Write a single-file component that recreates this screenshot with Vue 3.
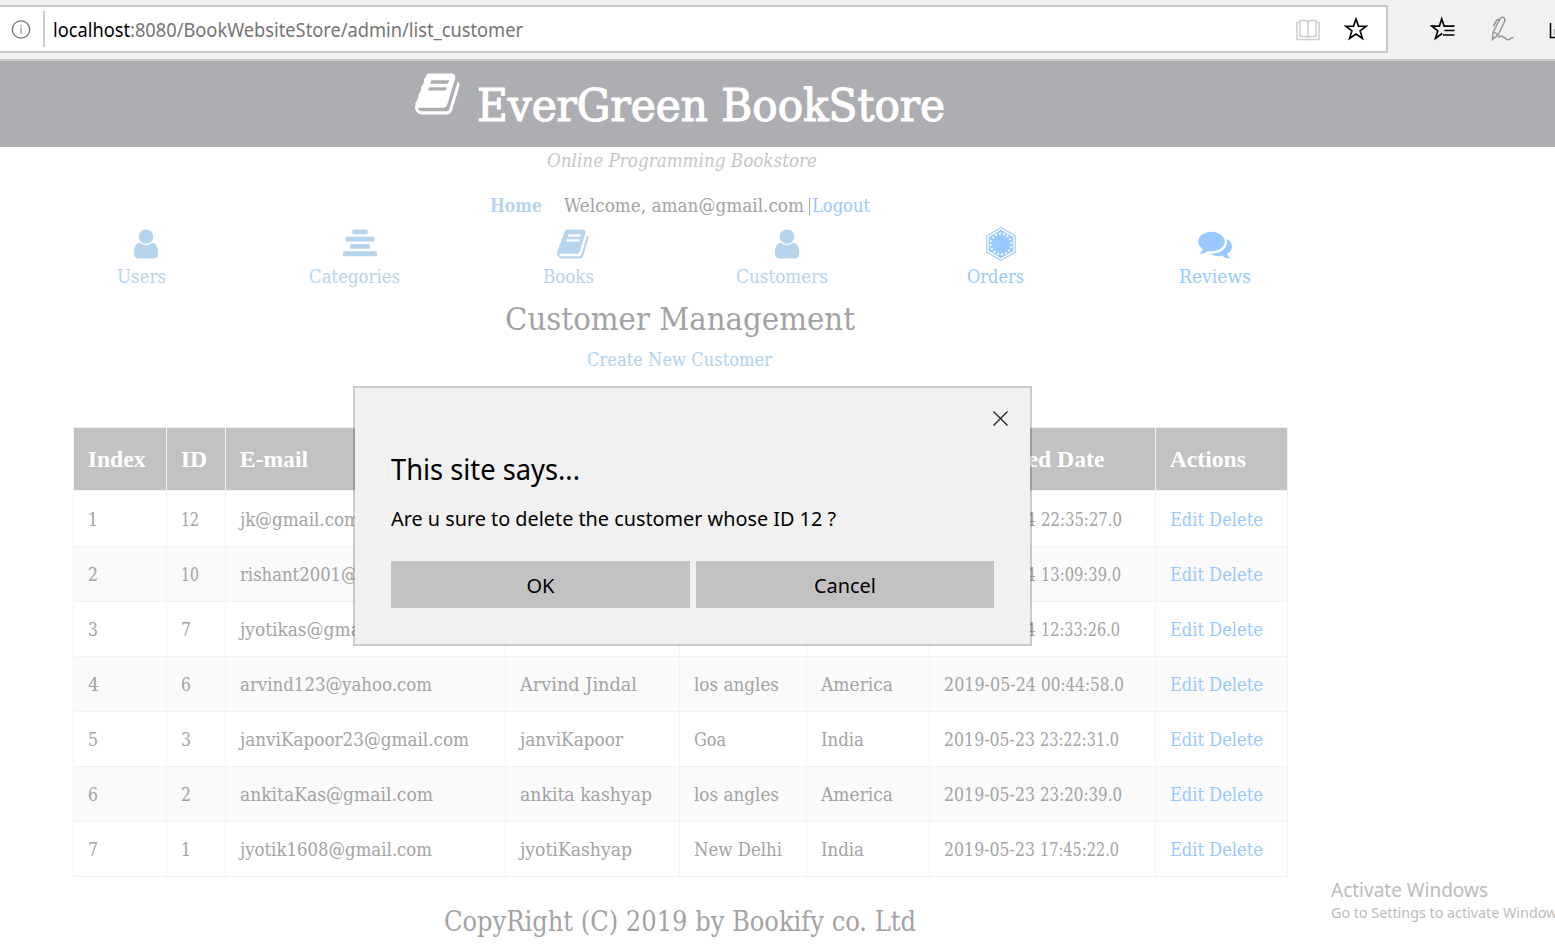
<script setup>
const icons = {
  book: 'M1639 478q40 57 18 129l-275 906q-19 64-76.5 107.5t-122.5 43.5h-923q-77 0-148.5-53.5t-99.5-131.5q-24-67-2-127 0-4 3-27t4-37q1-8-3-21.5t-3-19.5q2-11 8-21t16.5-23.5 16.5-23.5q23-38 45-91.5t30-91.5q3-10 .5-30t-.5-28q3-11 17-28t17-23q21-36 42-92t25-90q1-9-2.5-32t.5-28q4-13 22-30.5t22-22.5q19-26 42.5-84.5t27.5-96.5q1-8-3-25.5t-2-26.5q2-8 9-18t18-23 17-21q8-12 16.5-30.5t15-35 16-36 19.5-32 26.5-23.5 36-11.5 47.5 5.5l-1 3q38-9 51-9h761q74 0 114 56t18 130l-274 906q-36 119-71.5 153.5t-128.5 34.5h-869q-27 0-38 15-11 16-1 43 24 70 144 70h923q29 0 56-15.5t35-41.5l300-987q7-22 5-57 38 15 59 43zm-1064 2q-4 13 2 22.5t20 9.5h608q13 0 25.5-9.5t16.5-22.5l21-64q4-13-2-22.5t-20-9.5h-608q-13 0-25.5 9.5t-16.5 22.5zm-83 256q-4 13 2 22.5t20 9.5h608q13 0 25.5-9.5t16.5-22.5l21-64q4-13-2-22.5t-20-9.5h-608q-13 0-25.5 9.5t-16.5 22.5z',
  user: 'M1536 1399q0 109-62.5 187t-150.5 78h-854q-88 0-150.5-78t-62.5-187q0-85 8.5-160.5t31.5-152 58.5-131 94-89 134.5-34.5q131 128 313 128t313-128q76 0 134.5 34.5t94 89 58.5 131 31.5 152 8.5 160.5zm-256-887q0 159-112.5 271.5t-271.5 112.5-271.5-112.5-112.5-271.5 112.5-271.5 271.5-112.5 271.5 112.5 112.5 271.5z',
  bars: 'M560 128h672q64 0 64 64v128q0 64-64 64h-672q-64 0-64-64v-128q0-64 64-64zM192 512h1408q64 0 64 64v128q0 64-64 64h-1408q-64 0-64-64v-128q0-64 64-64zM448 896h896q64 0 64 64v128q0 64-64 64h-896q-64 0-64-64v-128q0-64 64-64zM64 1280h1664q64 0 64 64v128q0 64-64 64h-1664q-64 0-64-64v-128q0-64 64-64z',
  comments: 'M1408 768q0 139-94 257t-256.5 186.5-353.5 68.5q-86 0-176-16-124 88-278 128-36 9-86 16h-3q-11 0-20.5-8t-11.5-21q-1-3-1-6.5t.5-6.5 2-6l2.5-5 3.5-5.5 4-5 4.5-5 4-4.5q5-6 23-25t26-29.5 22.5-29 25-38.5 20.5-44q-124-72-195-177t-71-224q0-139 94-257t256.5-186.5 353.5-68.5 353.5 68.5 256.5 186.5 94 257zm384 256q0 120-71 224.5t-195 176.5q10 24 20.5 44t25 38.5 22.5 29 26 29.5 23 25q1 1 4 4.5t4.5 5 4 5 3.500 5.500l2.500 5 2 6 .5 6.500-1 6.500q-3 14-13 22t-22 7q-50-7-86-16-154-40-278-128-90 16-176 16-271 0-472-132 58 4 88 4 161 0 309-45t264-129q125-92 192-212t67-254q0-77-23-152 129 71 204 178t75 230z'
}

// Sunburst: 16 narrow spokes around a filled core
const burst = Array.from({ length: 32 }, (_, i) => {
  const a = ((i + 0.5) * Math.PI) / 16
  const at = (rad, ang) => `${(17 + rad * Math.cos(ang)).toFixed(2)},${(17 + rad * Math.sin(ang)).toFixed(2)}`
  return i % 2 ? at(8.4, a) : `${at(11.8, a - 0.07)} ${at(11.8, a + 0.07)}`
}).join(' ')

const nav = [
  { label: 'Users', icon: 'user', w: 49 },
  { label: 'Categories', icon: 'bars', w: 91 },
  { label: 'Books', icon: 'book', w: 51 },
  { label: 'Customers', icon: 'user', w: 92 },
  { label: 'Orders', icon: 'order', w: 57, bright: true },
  { label: 'Reviews', icon: 'comments', w: 72, bright: true }
]

const heads = ['Index', 'ID', 'E-mail', '', '', '', 'Registered Date', 'Actions']

// Every cell is [text, width in px]; a width of 0 keeps the natural width
const rows = [
  { cells: [['1', 0], ['12', 18], ['jk@gmail.com', 120], ['', 0], ['', 0], ['', 0]], date: ['2019-05-24', 92], time: ['22:35:27.0', 81] },
  { cells: [['2', 10], ['10', 18], ['rishant2001@gmail.com', 204], ['', 0], ['', 0], ['', 0]], date: ['2019-05-24', 92], time: ['13:09:39.0', 80] },
  { cells: [['3', 10], ['7', 10], ['jyotikas@gmail.com', 173], ['', 0], ['', 0], ['', 0]], date: ['2019-05-24', 92], time: ['12:33:26.0', 79] },
  { cells: [['4', 11], ['6', 10], ['arvind123@yahoo.com', 192], ['Arvind Jindal', 117], ['los angles', 85], ['America', 72]], date: ['2019-05-24', 92], time: ['00:44:58.0', 83] },
  { cells: [['5', 10], ['3', 10], ['janviKapoor23@gmail.com', 229], ['janviKapoor', 103], ['Goa', 32], ['India', 43]], date: ['2019-05-23', 91], time: ['23:22:31.0', 79] },
  { cells: [['6', 10], ['2', 10], ['ankitaKas@gmail.com', 193], ['ankita kashyap', 132], ['los angles', 85], ['America', 72]], date: ['2019-05-23', 91], time: ['23:20:39.0', 82] },
  { cells: [['7', 10], ['1', 0], ['jyotik1608@gmail.com', 192], ['jyotiKashyap', 112], ['New Delhi', 88], ['India', 43]], date: ['2019-05-23', 91], time: ['17:45:22.0', 79] }
]

// Stretches a run of text horizontally to the given width
const vFit = {
  mounted(el, { value }) {
    const natural = el.getBoundingClientRect().width
    if (!natural || !value) return
    el.style.transform = `scaleX(${value / natural})`
    el.style.marginRight = `${value - natural}px`
  }
}
</script>

<template>
  <div class="window">
    <div class="toolbar">
      <div class="address">
        <svg class="info" viewBox="0 0 20 20" width="20" height="20" fill="none" stroke="#6f6f6f">
          <circle cx="10" cy="10.500" r="8.700" stroke-width="1.300" />
          <path d="M10 8.800v6M10 6v1.600" stroke="#8c8c8c" stroke-width="1.200" />
        </svg>
        <span class="divider"></span>
        <span class="url"><span v-fit="77" class="fit host">localhost</span><span v-fit="393" class="fit">:8080/BookWebsiteStore/admin/list_customer</span></span>
        <svg class="reader" viewBox="0 0 24 22" width="24" height="22" fill="none" stroke="#cdcdcd" stroke-width="1.500">
          <path d="M4 18V1.500h5.500q2.500 0 2.500 2.500V19q0-1.500-2.500-1.500H4M20 18V1.500h-5.500Q12 1.500 12 4M12 19q0-1.500 2.500-1.500H20" />
          <path d="M3.500 3.500H1v17h10l1 .5 1-.5h10v-17h-2.500" />
        </svg>
        <svg class="star" viewBox="0 0 24 24" width="24" height="24" fill="none" stroke="#000" stroke-width="1.600">
          <path d="M12 2l2.500 7.200h7.900l-6.300 4.700 2.400 7.600L12 17l-6.500 4.500 2.400-7.600L1.600 9.200h7.900z" />
        </svg>
      </div>
      <svg class="hub" viewBox="0 0 25 24" width="25" height="24" fill="none" stroke="#000" stroke-width="1.700">
        <path d="M24.500 9.200H14.200L11.700 2 9.400 9.200H1.800l6 4.700-2.300 7.400 6.700-4.800" />
        <path d="M14.500 13.500h10M13 18h11.500" />
      </svg>
      <svg class="pen" viewBox="0 0 26 26" width="26" height="26" fill="none" stroke="#999" stroke-width="1.600">
        <path d="M4 16.500L11 3q1.500-2.500 3.500-1.500t1 4L9 19l-5.500 4.500zM4 16.500q3 0 5 2.500M10.500 3.500Q8 3 7 5.500L4.500 10M3 24l3-3M9 21.500q2-2 4.500-1t4.500 3q1.500.8 3-.5t3.500-1.500" />
      </svg>
      <svg class="share" viewBox="0 0 7 18" width="7" height="18" fill="none" stroke="#000" stroke-width="1.500">
        <path d="M1.500 0v14.500H7" /><path d="M6 6v6" stroke="#888" />
      </svg>
    </div>

    <header class="banner">
      <svg class="logo" viewBox="0 0 1792 1792" width="48" height="48" preserveAspectRatio="none"><path :d="icons.book" fill="#fff" /></svg>
      <h1><span v-fit="468" class="fit">EverGreen BookStore</span></h1>
    </header>

    <main class="page">
      <p class="tagline"><span v-fit="270" class="fit">Online Programming Bookstore</span></p>
      <p class="session">
        <b><span v-fit="52" class="fit">Home</span></b>
        <span class="welcome"><span v-fit="240" class="fit">Welcome, aman@gmail.com</span></span>
        <span class="pipe"></span>
        <a><span v-fit="58" class="fit">Logout</span></a>
      </p>

      <nav class="menu">
        <a v-for="n in nav" :key="n.label" :class="[n.icon, { bright: n.bright }]">
          <svg v-if="n.icon === 'order'" viewBox="0 0 34 34" width="34" height="34">
            <path d="M17 .6L31.200 8.800v16.400L17 33.400 2.800 25.200V8.800z" fill="none" stroke="currentColor" stroke-width="1.100" />
            <path d="M17 2.800L29.300 9.900v14.200L17 31.200 4.700 24.100V9.900z" fill="currentColor" />
            <circle cx="17" cy="17" r="11.400" fill="#fff" />
            <polygon :points="burst" fill="currentColor" />
          </svg>
          <svg v-else viewBox="0 0 1792 1792" width="34" height="34"><path :d="icons[n.icon]" fill="currentColor" /></svg>
          <span class="label"><span v-fit="n.w" class="fit">{{ n.label }}</span></span>
        </a>
      </nav>

      <h2><span v-fit="350" class="fit">Customer Management</span></h2>
      <p class="create"><span v-fit="185" class="fit">Create New Customer</span></p>

      <table>
        <colgroup>
          <col class="c1" /><col class="c2" /><col class="c3" /><col class="c4" />
          <col class="c5" /><col class="c6" /><col class="c7" /><col class="c8" />
        </colgroup>
        <thead>
          <tr><th v-for="(t, i) in heads" :key="i">{{ t }}</th></tr>
        </thead>
        <tbody>
          <tr v-for="(r, i) in rows" :key="i">
            <td v-for="(c, j) in r.cells" :key="j"><span v-fit="c[1]" class="fit">{{ c[0] }}</span></td>
            <td class="stamp"><span v-fit="r.date[1]" class="fit">{{ r.date[0] }}</span><span class="time"><span v-fit="r.time[1]" class="fit">{{ r.time[0] }}</span></span></td>
            <td class="actions"><a><span v-fit="34" class="fit">Edit</span></a><a><span v-fit="54" class="fit">Delete</span></a></td>
          </tr>
        </tbody>
      </table>

      <footer><span v-fit="472" class="fit">CopyRight (C) 2019 by Bookify co. Ltd</span></footer>
    </main>

    <section class="dialog">
      <svg class="close" viewBox="0 0 16 16" width="16" height="16" stroke="#222" stroke-width="1.300"><path d="M.5 1.500l14 14M14.500 1.500l-14 14" /></svg>
      <h3><span v-fit="189" class="fit">This site says...</span></h3>
      <p><span v-fit="445" class="fit">Are u sure to delete the customer whose ID 12 ?</span></p>
      <div class="buttons">
        <button><span v-fit="28" class="fit">OK</span></button>
        <button><span v-fit="62" class="fit">Cancel</span></button>
      </div>
    </section>

    <aside class="watermark">
      <div class="big"><span v-fit="157" class="fit">Activate Windows</span></div>
      <div class="small"><span v-fit="237" class="fit">Go to Settings to activate Windows.</span></div>
    </aside>
  </div>
</template>

<style>
html, body { margin: 0; overflow: hidden; background: #fff; }
</style>

<style scoped>
.window { position: relative; width: 1555px; height: 946px; overflow: hidden; background: #fff; color: #a3a3a3; font-family: "DejaVu Serif Condensed", "DejaVu Serif", serif; font-stretch: condensed; font-size: 18px; }
.fit { display: inline-block; white-space: nowrap; transform-origin: 0 50%; }
p, h1, h2, h3 { margin: 0; font-weight: normal; }
svg { display: block; flex: none; }

.toolbar { display: flex; align-items: flex-start; box-sizing: border-box; height: 61px; padding-top: 5px; background: #f1f1f1; border-bottom: 2px solid #c9c9c9; overflow: hidden; }
.address { display: flex; align-items: center; box-sizing: border-box; width: 1388px; height: 48px; padding-left: 11px; background: #fff; border: 2px solid #c9c9c9; border-left: 0; flex: none; }
.divider { width: 2px; height: 36px; margin-left: 12px; background: #ccc; }
.url { flex: 1; margin-left: 8px; padding-top: 2px; font: 20px/28px "Noto Sans", "Open Sans", sans-serif; color: #757575; }
.host { color: #000; }
.reader { margin: 2px 24px 0 0; }
.star { margin-right: 18px; }
.hub { margin: 12px 0 0 42px; }
.pen { margin: 11px 0 0 34px; }
.share { margin: 18px 0 0 34px; }

.banner { display: flex; box-sizing: border-box; height: 86px; padding-left: 415px; background: #adaeb2; color: #fff; }
.logo { margin-top: 9px; }
h1 { margin-left: 14px; font-size: 44px; line-height: 90px; -webkit-text-stroke: 1.100px #fff; }

.page { width: 1360px; text-align: center; }
.tagline { height: 27px; line-height: 27px; font-style: italic; color: #c4c7cb; padding-left: 3px; }
.session { display: flex; justify-content: center; align-items: center; height: 24px; margin: 20px 0 0; line-height: 24px; }
.session b { color: #b7d5ee; }
.welcome { margin-left: 22px; }
.pipe { width: 1px; height: 17px; margin: 1px 2px 0 5px; background: #aaa; }
a { color: #99c9ff; }

.menu { display: grid; grid-template-columns: 213px 214px 214px 213px 214px 224px; margin: 9px 0 0 34.5px; }
.menu a { display: flex; flex-direction: column; align-items: center; color: #b6d4ec; }
.menu a.bright { color: #99c9ff; }
.menu svg { margin-left: 10px; }
.menu .comments svg { margin-left: 0; }
.label { height: 30px; line-height: 32px; }

h2 { margin: 7px 1px 0 0; font-size: 31px; line-height: 42px; }
.create { height: 24px; margin: 7px 1px 0 0; line-height: 26px; color: #b0d3ee; }

table { width: 1214px; margin: 56px 0 0 73px; table-layout: fixed; border-collapse: collapse; text-align: left; }
th, td { box-sizing: border-box; padding: 0 0 0 13.700px; border: 1px solid #f2f2f2; white-space: nowrap; }
th { height: 63px; background: #c2c2c2; color: #fff; font: bold 23.700px "Liberation Serif", serif; }
td { height: 55px; padding-top: 2px; line-height: 24px; }
tbody tr:first-child td { height: 56px; }
tbody tr:nth-child(even) { background: #fafafa; }
.c1 { width: 93px; } .c2 { width: 59px; } .c3 { width: 280px; } .c4 { width: 174px; }
.c5 { width: 127px; } .c6 { width: 123px; } .c7 { width: 226px; } .c8 { width: 132px; }
.time, .actions a + a { margin-left: 5px; }
footer { margin-top: 24px; font-size: 27px; line-height: 42px; }

.dialog { position: absolute; left: 353px; top: 386px; box-sizing: border-box; width: 679px; height: 260px; padding: 57px 36px 0; background: #f1f1f1; background-clip: padding-box; border: 2px solid rgba(0, 0, 0, 0.2); color: #000; font-family: "Noto Sans", "Open Sans", sans-serif; }
.close { position: absolute; top: 22px; right: 21px; }
h3 { font-size: 29px; line-height: 48px; }
.dialog p { margin-top: 10px; font-size: 20.500px; line-height: 30px; }
.buttons { display: grid; grid-template-columns: 299px 298px; gap: 6px; margin-top: 28px; }
button { height: 47px; padding: 2px 0 0; border: 0; background: #c2c2c2; color: #000; font: 20px "Noto Sans", "Open Sans", sans-serif; }

.watermark { position: absolute; left: 1331px; top: 876px; color: #bcbcbc; font-family: "Noto Sans", "Open Sans", sans-serif; }
.big { font-size: 19px; line-height: 28px; }
.small { font-size: 14px; line-height: 18px; }
</style>
